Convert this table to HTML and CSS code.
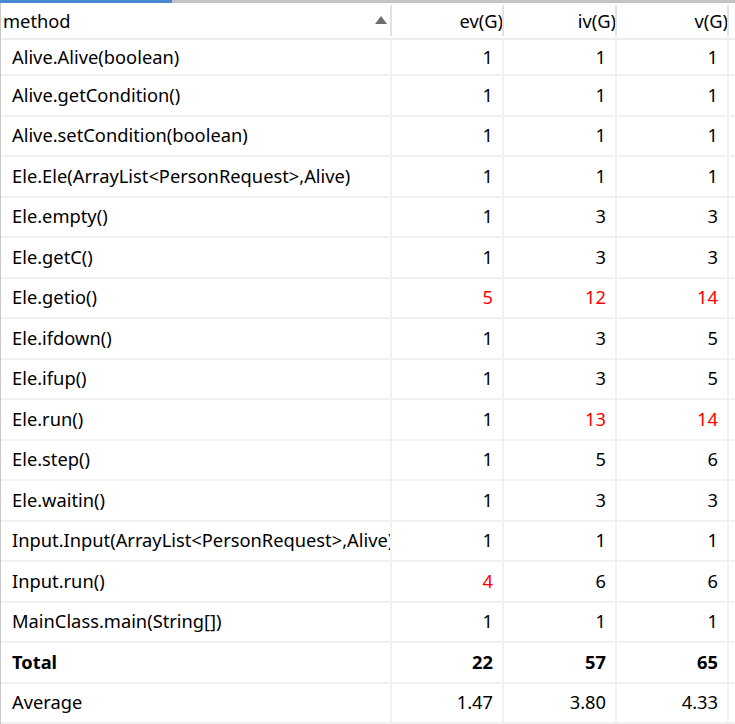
FILE: index.html
```html
<!DOCTYPE html>
<html>
<head>
<meta charset="utf-8">
<link rel="stylesheet" href="styles.css">
</head>
<body>
<div class="tabbar"><div class="tab-active"></div></div>
<div class="grid">
  <div class="row head">
    <div class="cell name">method<span class="sort"></span></div>
    <div class="cell num">ev(G)</div>
    <div class="cell num">iv(G)</div>
    <div class="cell num">v(G)</div>
  </div>
  <div class="row first">
    <div class="cell name">Alive.Alive(boolean)</div><div class="cell num">1</div><div class="cell num">1</div><div class="cell num">1</div>
  </div>
  <div class="row">
    <div class="cell name">Alive.getCondition()</div><div class="cell num">1</div><div class="cell num">1</div><div class="cell num">1</div>
  </div>
  <div class="row">
    <div class="cell name">Alive.setCondition(boolean)</div><div class="cell num">1</div><div class="cell num">1</div><div class="cell num">1</div>
  </div>
  <div class="row">
    <div class="cell name">Ele.Ele(ArrayList&lt;PersonRequest&gt;,Alive)</div><div class="cell num">1</div><div class="cell num">1</div><div class="cell num">1</div>
  </div>
  <div class="row">
    <div class="cell name">Ele.empty()</div><div class="cell num">1</div><div class="cell num">3</div><div class="cell num">3</div>
  </div>
  <div class="row">
    <div class="cell name">Ele.getC()</div><div class="cell num">1</div><div class="cell num">3</div><div class="cell num">3</div>
  </div>
  <div class="row">
    <div class="cell name">Ele.getio()</div><div class="cell num hot">5</div><div class="cell num hot">12</div><div class="cell num hot">14</div>
  </div>
  <div class="row">
    <div class="cell name">Ele.ifdown()</div><div class="cell num">1</div><div class="cell num">3</div><div class="cell num">5</div>
  </div>
  <div class="row">
    <div class="cell name">Ele.ifup()</div><div class="cell num">1</div><div class="cell num">3</div><div class="cell num">5</div>
  </div>
  <div class="row">
    <div class="cell name">Ele.run()</div><div class="cell num">1</div><div class="cell num hot">13</div><div class="cell num hot">14</div>
  </div>
  <div class="row">
    <div class="cell name">Ele.step()</div><div class="cell num">1</div><div class="cell num">5</div><div class="cell num">6</div>
  </div>
  <div class="row">
    <div class="cell name">Ele.waitin()</div><div class="cell num">1</div><div class="cell num">3</div><div class="cell num">3</div>
  </div>
  <div class="row">
    <div class="cell name">Input.Input(ArrayList&lt;PersonRequest&gt;,Alive)</div><div class="cell num">1</div><div class="cell num">1</div><div class="cell num">1</div>
  </div>
  <div class="row">
    <div class="cell name">Input.run()</div><div class="cell num hot">4</div><div class="cell num">6</div><div class="cell num">6</div>
  </div>
  <div class="row">
    <div class="cell name">MainClass.main(String[])</div><div class="cell num">1</div><div class="cell num">1</div><div class="cell num">1</div>
  </div>
  <div class="row total">
    <div class="cell name">Total</div><div class="cell num">22</div><div class="cell num">57</div><div class="cell num">65</div>
  </div>
  <div class="row">
    <div class="cell name">Average</div><div class="cell num">1.47</div><div class="cell num">3.80</div><div class="cell num">4.33</div>
  </div>
</div>
</body>
</html>
```

FILE: styles.css
```css
html, body {
  margin: 0;
  padding: 0;
  background: #ffffff;
}
body {
  width: 735px;
  height: 724px;
  overflow: hidden;
  font-family: "Noto Sans", "Open Sans", sans-serif;
  font-size: 18.3px;
  color: #000;
}
.tabbar {
  height: 3px;
  background: #c4c4c4;
}
.tab-active {
  width: 172px;
  height: 3px;
  background: #4a88d4;
}
.grid {
  border-left: 1px solid #c8c8c8;
  display: flex;
  flex-direction: column;
}
.row {
  display: grid;
  grid-template-columns: 391px 112px 113px 112px;
  height: 40.5px;
  border-bottom: 2px solid #f1f1f1;
  box-sizing: border-box;
}
.row.head {
  height: 37px;
  border-bottom: 2px solid #ececec;
}
.row.first {
  height: 36px;
}
.cell {
  display: flex;
  align-items: center;
  overflow: hidden;
  white-space: nowrap;
  border-right: 2px solid #f1f1f1;
  box-sizing: border-box;
  padding-bottom: 2px;
}
.cell.name {
  padding-left: 11px;
}
.cell.num {
  justify-content: flex-end;
  padding-right: 9px;
}
.cell.hot {
  color: #ff0000;
}
.total .cell {
  font-weight: bold;
}
.head .cell {
  position: relative;
  border-right: none;
  padding-right: 1px;
  padding-bottom: 0;
}
.head .cell::after {
  content: "";
  position: absolute;
  right: 0;
  top: 2px;
  bottom: 2px;
  width: 2px;
  background: #e2e2e2;
}
.head .cell.name {
  padding-left: 2px;
}
.sort {
  position: absolute;
  left: 374px;
  top: 13px;
  width: 0;
  height: 0;
  border-left: 6px solid transparent;
  border-right: 6px solid transparent;
  border-bottom: 8px solid #6e6e6e;
}
```
